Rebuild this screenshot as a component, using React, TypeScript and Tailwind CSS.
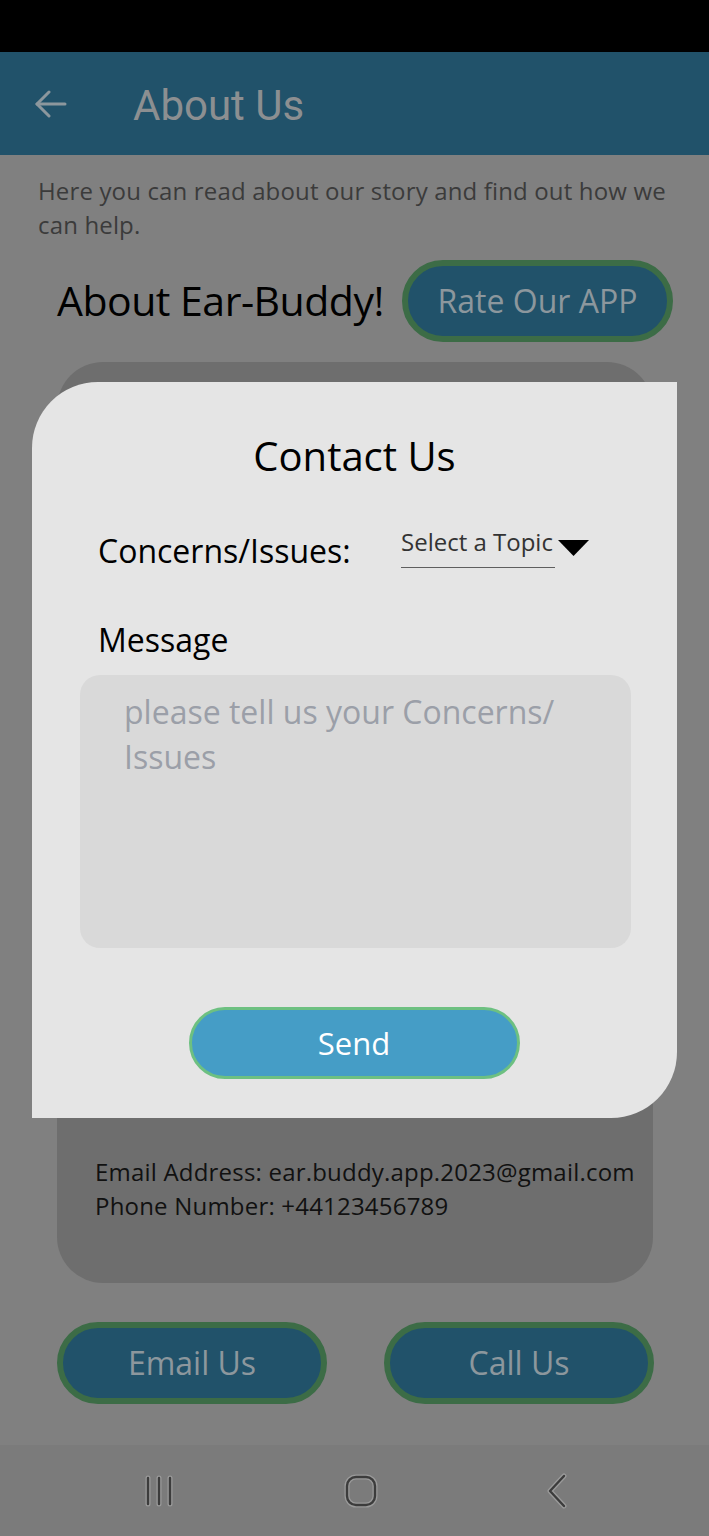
import React from "react";

// Dimmed "About Us" screen with the Contact Us sheet open on top

const sans = "font-['Open_Sans','Noto_Sans',sans-serif]";

function NavBar() {
  return (
    <div className="flex h-[91px] items-center bg-[#7b7b7b]">
      <div className="flex w-full items-center justify-between pl-[142px] pr-[140px]">
        <svg width="34" height="32" viewBox="0 0 34 32">
          {[6, 17, 28].map((x) => (
            <g key={x}>
              <line x1={x} y1="3" x2={x} y2="29" stroke="#9a9a9a" strokeWidth="5" strokeLinecap="round" />
              <line x1={x} y1="3" x2={x} y2="29" stroke="#3c3c3c" strokeWidth="2.4" strokeLinecap="round" />
            </g>
          ))}
        </svg>
        <svg width="34" height="34" viewBox="0 0 34 34">
          <rect x="3" y="3" width="28" height="28" rx="9" fill="none" stroke="#9a9a9a" strokeWidth="5" />
          <rect x="3" y="3" width="28" height="28" rx="9" fill="none" stroke="#3c3c3c" strokeWidth="2.4" />
        </svg>
        <svg width="24" height="36" viewBox="0 0 24 36">
          <polyline points="19,3 5,18 19,33" fill="none" stroke="#9a9a9a" strokeWidth="5" strokeLinecap="round" strokeLinejoin="round" />
          <polyline points="19,3 5,18 19,33" fill="none" stroke="#3c3c3c" strokeWidth="2.4" strokeLinecap="round" strokeLinejoin="round" />
        </svg>
      </div>
    </div>
  );
}

function PillButton({ label, width }: { label: string; width: string }) {
  return (
    <button
      className={`${width} h-[82px] rounded-full border-[6px] border-[#3c6c46] bg-[#21526a] text-[32px] text-[#8c979d] ${sans}`}
    >
      {label}
    </button>
  );
}

function ContactSheet() {
  return (
    <div className={`absolute left-[32px] top-[382px] h-[736px] w-[645px] rounded-tl-[66px] rounded-br-[66px] bg-[#e5e5e5] ${sans}`}>
      <h2 className="pt-[50px] text-center text-[40px] leading-[48px] text-black">Contact Us</h2>

      <div className="mt-[47px] flex items-start">
        <span className="ml-[66px] mt-[4px] text-[32px] leading-[40px] text-black">Concerns/Issues:</span>
        <div className="ml-auto mr-[88px] flex items-start">
          <div className="w-[154px] whitespace-nowrap border-b-[1.5px] border-[#5f5f5f] pb-[10px] text-[24px] leading-[30px] text-[#333333]">
            Select a Topic
          </div>
          <svg className="ml-[3px] mt-[13px]" width="31" height="16" viewBox="0 0 31 16">
            <polygon points="0,0 31,0 15.5,16" fill="#000" />
          </svg>
        </div>
      </div>

      <div className="ml-[66px] mt-[49px] text-[32px] leading-[40px] text-black">Message</div>

      <div className="ml-[48px] mt-[15px] h-[273px] w-[551px] rounded-[20px] bg-[#d9d9d9] pl-[44px] pt-[14px] text-[32px] leading-[45px] text-[#9b9fa8]">
        please tell us your Concerns/
        <br />
        Issues
      </div>

      <div className="mt-[59px] flex justify-center pr-[1px]">
        <button className="h-[72px] w-[331px] rounded-full border-[3px] border-[#6dc081] bg-[#459dc6] text-[31px] font-medium text-white">
          Send
        </button>
      </div>
    </div>
  );
}

export default function App() {
  return (
    <div className="relative h-[1536px] w-[709px] overflow-hidden bg-[#808080]">
      {/* status bar */}
      <div className="h-[52px] bg-black" />

      {/* app bar */}
      <div className="flex h-[103px] items-center bg-[#21526a]">
        <svg className="ml-[35px]" width="32" height="28" viewBox="0 0 32 28">
          <polyline points="14,2 2,14 14,26" fill="none" stroke="#8c979d" strokeWidth="3" strokeLinecap="round" strokeLinejoin="round" />
          <line x1="2" y1="14" x2="30" y2="14" stroke="#8c979d" strokeWidth="3" strokeLinecap="round" />
        </svg>
        <h1 className="ml-[66px] mt-[4px] font-['Roboto',sans-serif] text-[42px] text-[#8c8f91]">About Us</h1>
      </div>

      <p className={`pl-[38px] pt-[19px] text-[24px] leading-[34px] tracking-[0.15px] text-[#3b3b3b] ${sans}`}>
        Here you can read about our story and find out how we can help.
      </p>

      <div className="mt-[18px] flex items-center">
        <h2 className={`ml-[57px] text-[41px] tracking-[-0.5px] text-black ${sans}`}>About Ear-Buddy!</h2>
        <div className="ml-auto mr-[36px]">
          <PillButton label="Rate Our APP" width="w-[271px]" />
        </div>
      </div>

      <div className={`ml-[57px] mt-[20px] flex h-[921px] w-[596px] flex-col justify-end rounded-[46px] bg-[#6e6e6e] pb-[60px] pl-[38px] text-[24px] leading-[34px] tracking-[0.2px] text-[#111111] ${sans}`}>
        <div className="whitespace-nowrap">Email Address: ear.buddy.app.2023@gmail.com</div>
        <div>Phone Number: +44123456789</div>
      </div>

      <div className="mt-[39px] flex gap-[57px] pl-[57px]">
        <PillButton label="Email Us" width="w-[270px]" />
        <PillButton label="Call Us" width="w-[270px]" />
      </div>

      <div className="mt-[41px]">
        <NavBar />
      </div>

      <ContactSheet />
    </div>
  );
}
